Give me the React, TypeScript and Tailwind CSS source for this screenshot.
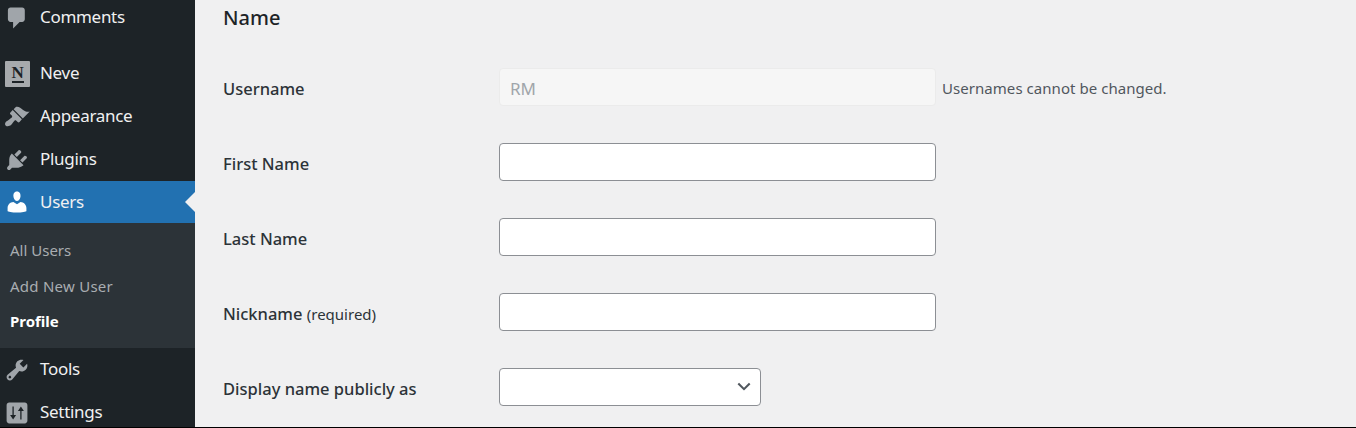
import React from 'react';

const ICONS = {
  comments: 'M5 2h9c1.1 0 2 .9 2 2v7c0 1.1-.9 2-2 2h-2l-5 5v-5H5c-1.1 0-2-.9-2-2V4c0-1.1.9-2 2-2z',
  appearance:
    'M14.48 11.06L7.41 3.99l1.5-1.5c.5-.56 2.3-.47 3.51.32 1.21.8 1.43 1.28 2.91 2.1 1.18.64 2.45 1.26 4.45.85zm-.71.71L6.7 4.7 4.93 6.47c-.39.39-.39 1.02 0 1.41l1.06 1.06c.39.39.39 1.03 0 1.42-.6.6-1.43 1.11-2.21 1.69-.35.26-.7.53-1.01.84C1.43 13.23 0 15.25 1.4 16.65c.75.75 2.77.76 4.13-.6.31-.31.58-.66.84-1.01.58-.78 1.09-1.61 1.69-2.21.39-.39 1.03-.39 1.42 0l1.06 1.06c.39.39 1.02.39 1.41 0z',
  plugins:
    'M13.11 4.36L9.87 7.6 8 5.73l3.24-3.24c.35-.34 1.05-.2 1.56.32.52.51.66 1.21.31 1.55zm-8 1.77l.91-1.12 9.01 9.01-1.19.84c-.71.71-2.63 1.16-3.82 1.16H6.14L4.9 17.26c-.59.59-1.54.59-2.12 0-.59-.58-.59-1.53 0-2.12l1.24-1.24v-3.88c0-1.13.4-3.19 1.09-3.89zm7.26 3.97l3.24-3.24c.34-.35 1.04-.21 1.55.31.52.51.66 1.21.31 1.55l-3.24 3.25z',
  users:
    'M10 9.25c-2.27 0-2.73-3.44-2.73-3.44C7 4.02 7.82 2 9.97 2c2.16 0 2.98 2.02 2.71 3.81 0 0-.41 3.44-2.68 3.44zm0 2.57L12.72 10c2.39 0 4.52 2.33 4.52 4.53v2.49s-3.65 1.13-7.24 1.13c-3.65 0-7.24-1.13-7.24-1.13v-2.49c0-2.25 1.94-4.48 4.47-4.48z',
  tools:
    'M16.68 9.77c-1.34 1.34-3.3 1.67-4.95.99l-5.41 6.52c-.99.99-2.59.99-3.58 0s-.99-2.59 0-3.57l6.52-5.42c-.68-1.65-.35-3.61.99-4.95 1.28-1.28 3.12-1.62 4.72-1.06l-2.89 2.89 2.82 2.82 2.86-2.87c.53 1.58.18 3.39-1.08 4.65zM3.81 16.21c.4.39 1.04.39 1.43 0 .4-.4.4-1.04 0-1.43-.39-.4-1.03-.4-1.43 0-.39.39-.39 1.03 0 1.43z',
  settings:
    'M18 16V4c0-1.1-.9-2-2-2H4c-1.1 0-2 .9-2 2v12c0 1.1.9 2 2 2h12c1.1 0 2-.9 2-2zM6.5 5h1v6.5H9.3L7 15 4.7 11.5h1.8zM13.5 15h-1V8.5h-1.8L13 5l2.3 3.5h-1.8z',
};

const Dashicon: React.FC<{ path: string; className?: string }> = ({ path, className }) => (
  <svg viewBox="0 0 20 20" className={`w-[26px] h-[26px] ${className ?? 'fill-[#a0a5aa]'}`}>
    <path d={path} />
  </svg>
);

const MenuItem: React.FC<{ label: string; icon: React.ReactNode; className?: string; labelClassName?: string }> = ({
  label,
  icon,
  className,
  labelClassName,
}) => (
  <div className={`${className ?? 'h-[43px]'} flex items-center pl-[4px] text-[17px] tracking-[-0.3px] text-[#f0f0f1]`}>
    <div className="w-[36px] shrink-0 flex items-center">{icon}</div>
    <span className={labelClassName ?? '-translate-y-px'}>{label}</span>
  </div>
);

const Row: React.FC<{ label: React.ReactNode; children?: React.ReactNode }> = ({ label, children }) => (
  <div className="h-[75px] flex items-center">
    <div className="w-[276px] shrink-0 pt-px text-[16.5px] font-medium text-[#2c3338]">{label}</div>
    {children}
  </div>
);

const TextField = () => (
  <input type="text" className="w-[437px] h-[38px] mb-[4px] bg-white border border-[#8c8f94] rounded-[4px]" />
);

export default function App() {
  return (
    <div className="h-[428px] w-[1356px] flex overflow-hidden bg-[#f0f0f1] border-b border-black font-['Noto_Sans','Open_Sans',sans-serif]">
      <aside className="w-[195px] shrink-0 bg-[#1d2327] -mt-[4px] overflow-hidden">
        <MenuItem label="Comments" icon={<Dashicon path={ICONS.comments} />} />
        <div className="h-[13px]" />
        <MenuItem
          label="Neve"
          icon={
            <div className="ml-px w-[25px] h-[26px] rounded-[1px] bg-[#a7aaad] flex flex-col items-center justify-center text-[#1d2327]">
              <span className="text-[17px] leading-[15px] font-bold font-['Liberation_Serif',serif]">N</span>
              <span className="w-[12px] h-[2px] bg-[#1d2327] mt-[1px]" />
            </div>
          }
        />
        <MenuItem label="Appearance" icon={<Dashicon path={ICONS.appearance} />} />
        <MenuItem label="Plugins" icon={<Dashicon path={ICONS.plugins} />} />
        <div className="relative bg-[#2271b1] text-white">
          <MenuItem
            className="h-[42px]"
            labelClassName=""
            label="Users"
            icon={<Dashicon path={ICONS.users} className="fill-white" />}
          />
          <div className="absolute right-0 top-1/2 -translate-y-1/2 border-y-[10px] border-y-transparent border-r-[10px] border-r-[#f0f0f1]" />
        </div>
        <div className="bg-[#2c3338] h-[125px] pl-[10px] pt-[9px] text-[15px] text-[#a9adb1]">
          <div className="h-[36px] flex items-center">All Users</div>
          <div className="h-[36px] flex items-center tracking-[0.25px]">Add New User</div>
          <div className="h-[35px] flex items-center font-bold text-white">Profile</div>
        </div>
        <MenuItem label="Tools" icon={<Dashicon path={ICONS.tools} />} />
        <MenuItem label="Settings" icon={<Dashicon path={ICONS.settings} />} />
      </aside>
      <main className="flex-1 pl-[28px]">
        <h2 className="h-[51px] pt-[4px] text-[20px] leading-[28px] font-medium text-[#1d2327]">Name</h2>
        <Row label="Username">
          <div className="w-[437px] h-[38px] mb-[4px] flex items-center pl-[10px] pt-[4px] bg-[#f6f6f6] border border-[#ebebeb] rounded-[4px] text-[17px] text-[#a0a5aa]">
            RM
          </div>
          <span className="ml-[6px] text-[15px] tracking-[0.05px] text-[#50575e]">Usernames cannot be changed.</span>
        </Row>
        <Row label="First Name">
          <TextField />
        </Row>
        <Row label="Last Name">
          <TextField />
        </Row>
        <Row
          label={
            <>
              Nickname <span className="text-[15px] font-normal">(required)</span>
            </>
          }
        >
          <TextField />
        </Row>
        <Row label="Display name publicly as">
          <div className="w-[262px] h-[38px] mb-[4px] flex items-center justify-end pr-[9px] bg-white border border-[#8c8f94] rounded-[4px]">
            <svg viewBox="0 0 16 10" className="w-[14px] h-[9px] fill-none stroke-[#50575e] stroke-[2.4]">
              <path d="M1.5 1.5L8 8l6.5-6.5" />
            </svg>
          </div>
        </Row>
      </main>
    </div>
  );
}
